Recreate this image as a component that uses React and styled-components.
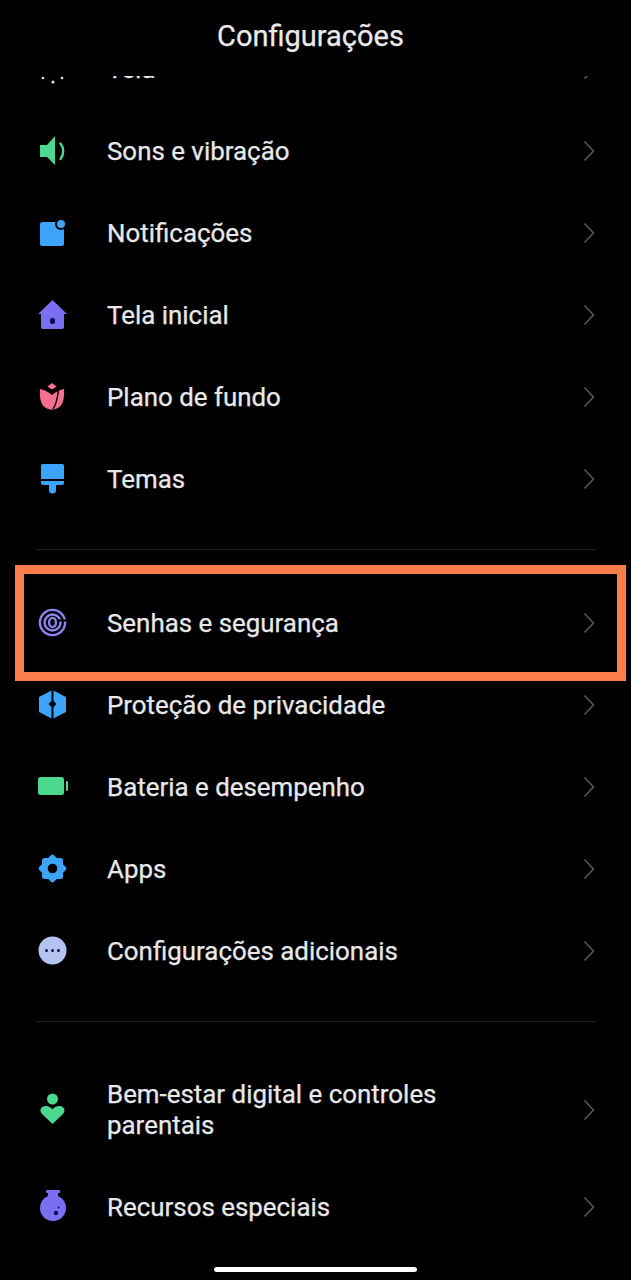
import React from "react";
import styled, { createGlobalStyle } from "styled-components";

const GlobalStyle = createGlobalStyle`
  html, body {
    margin: 0;
    background: #000;
  }
`;

const Screen = styled.div`
  width: 631px;
  height: 1280px;
  display: flex;
  flex-direction: column;
  overflow: hidden;
  background: #000;
  font-family: Roboto, "Liberation Sans", sans-serif;
`;

const Header = styled.header`
  height: 76px;
  flex-shrink: 0;
  display: flex;
  justify-content: center;
  padding: 19px 10px 0 0;
  box-sizing: border-box;
`;

const Title = styled.h1`
  margin: 0;
  font-size: 29px;
  line-height: 34px;
  font-weight: 400;
  color: #eaeaea;
  -webkit-text-stroke: 0.25px #eaeaea;
`;

const Scroller = styled.div`
  flex: 1;
  overflow: hidden;
`;

const List = styled.div`
  margin-top: -48px;
`;

const Row = styled.div`
  position: relative;
  display: flex;
  align-items: center;
  min-height: 82px;
  padding: 0 36px 0 35px;
  box-sizing: border-box;
`;

const IconBox = styled.svg`
  width: 34px;
  height: 34px;
  flex-shrink: 0;
  margin-right: 38px;
`;

const Label = styled.div`
  flex: 1;
  max-width: 400px;
  padding: 25px 0;
  font-size: 25.9px;
  line-height: 31px;
  color: #e8e8e8;
  -webkit-text-stroke: 0.25px #e8e8e8;
`;

const Chevron = styled.svg`
  width: 12px;
  height: 22px;
  margin-left: auto;
  flex-shrink: 0;
`;

const Highlight = styled.div`
  position: absolute;
  top: -17px;
  bottom: -17px;
  left: 15px;
  right: 5px;
  border: 9px solid #fb7d4b;
  pointer-events: none;
`;

const Divider = styled.div`
  height: 1px;
  margin: ${(p) => p.$top}px 36px ${(p) => p.$bottom}px 37px;
  background: #222;
`;

const GestureArea = styled.div`
  height: 32px;
  flex-shrink: 0;
  display: flex;
  justify-content: center;
  padding-top: 19px;
  box-sizing: border-box;
`;

const HomeBar = styled.div`
  width: 203px;
  height: 5px;
  border-radius: 3px;
  background: #fff;
`;

const GREEN = "#4ad98f";
const BLUE = "#3ca5fb";
const VIOLET = "#7a6ff0";
const NAVY = "#0c0c50";

const sunIcon = (
  <g fill="#e8e0d0">
    <circle cx="8" cy="26" r="1.3" />
    <circle cx="18" cy="30" r="1.6" />
    <circle cx="27" cy="26" r="1.3" />
    <circle cx="18" cy="17" r="7" />
  </g>
);

const soundIcon = (
  <g>
    <path d="M5 11h7l8-9v29l-8-8H5z" fill={GREEN} />
    <path d="M25.5 9.5c3.6 4.5 3.6 11 0 15.5" fill="none" stroke={GREEN} strokeWidth="2.4" strokeLinecap="round" />
  </g>
);

const notificationIcon = (
  <g>
    <rect x="5" y="6" width="24" height="24" rx="2.5" fill={BLUE} />
    <circle cx="26" cy="8" r="6" fill="#000" />
    <circle cx="26" cy="8" r="4" fill={BLUE} />
  </g>
);

const homeIcon = (
  <g>
    <path d="M17.5 2L32 16h-3v13a2 2 0 0 1-2 2H8a2 2 0 0 1-2-2V16H3z" fill={VIOLET} />
    <rect x="15" y="20" width="5" height="6" rx="2" fill={NAVY} />
  </g>
);

const tulipIcon = (
  <g>
    <path d="M5 9c4 .7 8 2.700 12 6 4-3.300 8-5.300 12-6 1 11-2 20.500-12 20.500S4 20 5 9z" fill="#f4708c" />
    <path d="M17 3l4.500 3.500-4.500 3.500-4.500-3.500z" fill="#f4708c" />
    <path d="M23.500 9c-.5 6-1.500 14-5.500 20" fill="none" stroke="#000" strokeWidth="1.400" />
    <path d="M11 8.500c4 1.500 8 2.500 12.500 .5" fill="none" stroke="#000" strokeWidth="1.400" />
  </g>
);

const brushIcon = (
  <g fill={BLUE}>
    <path d="M6 3.500A1.500 1.500 0 0 1 7.500 2h20A1.500 1.500 0 0 1 29 3.500V17H6z" />
    <path d="M6 19h23v2a2 2 0 0 1-2 2H8a2 2 0 0 1-2-2z" />
    <path d="M14 23h7v5a3.500 3.500 0 0 1-7 0z" />
  </g>
);

const fingerprintIcon = (
  <g>
    <g fill="none" stroke="#8d83ef" strokeWidth="2.400">
      <circle cx="17.500" cy="16.500" r="12.600" />
      <circle cx="17.500" cy="16.500" r="8" />
      <ellipse cx="17.500" cy="16.500" rx="3.400" ry="4.600" />
    </g>
    <rect x="23" y="13.500" width="9" height="2" fill="#000" />
  </g>
);

const shieldIcon = (
  <g>
    <path d="M17.500 2L31 9v15l-13.500 7L4 24V9z" fill={BLUE} />
    <rect x="16.500" y="2" width="2" height="29" fill="#000" />
    <path d="M17.500 12l4 4-4 4-4-4z" fill="#000" />
  </g>
);

const batteryIcon = (
  <g fill={GREEN}>
    <rect x="3" y="7" width="26" height="18" rx="2.500" />
    <rect x="31" y="11" width="2" height="10" rx="1" />
  </g>
);

const gearIcon = (
  <g>
    <rect x="7" y="6" width="21" height="21" rx="2.500" fill={BLUE} />
    <rect x="7" y="6" width="21" height="21" rx="2.500" fill={BLUE} transform="rotate(45 17.500 16.500)" />
    <circle cx="17.500" cy="16.500" r="4.800" fill="#000" />
  </g>
);

const moreIcon = (
  <g>
    <circle cx="17.500" cy="16.500" r="14" fill="#b4c3ef" />
    <circle cx="11.500" cy="16.500" r="1.500" fill={NAVY} />
    <circle cx="17.500" cy="16.500" r="1.500" fill={NAVY} />
    <circle cx="23.500" cy="16.500" r="1.500" fill={NAVY} />
  </g>
);

const heartIcon = (
  <g fill={GREEN}>
    <circle cx="17.500" cy="6" r="5.500" />
    <path d="M17.500 31L7.500 21.500C3.500 17.500 6 13 10.500 13c3 0 5.500 1.500 7 3.500 1.500-2 4-3.500 7-3.500 4.500 0 7 4.500 3 8.500z" />
  </g>
);

const flaskIcon = (
  <g>
    <rect x="11" y="0" width="14" height="3" rx="1" fill={VIOLET} />
    <rect x="13" y="2" width="10" height="8" fill={VIOLET} />
    <circle cx="18" cy="18" r="13" fill={VIOLET} />
    <circle cx="21" cy="23" r="2.200" fill={NAVY} />
    <circle cx="23.500" cy="17.500" r="1" fill={NAVY} />
  </g>
);

const Item = ({ icon, children, highlighted }) => (
  <Row>
    <IconBox viewBox="0 0 34 34">{icon}</IconBox>
    <Label>{children}</Label>
    <Chevron viewBox="0 0 12 22">
      <path d="M1.500 1.500L10.500 11l-9 9.500" fill="none" stroke="#565656" strokeWidth="1.600" />
    </Chevron>
    {highlighted && <Highlight />}
  </Row>
);

export default function App() {
  return (
    <Screen>
      <GlobalStyle />
      <Header>
        <Title>Configurações</Title>
      </Header>
      <Scroller>
        <List>
          <Item icon={sunIcon}>Tela</Item>
          <Item icon={soundIcon}>Sons e vibração</Item>
          <Item icon={notificationIcon}>Notificações</Item>
          <Item icon={homeIcon}>Tela inicial</Item>
          <Item icon={tulipIcon}>Plano de fundo</Item>
          <Item icon={brushIcon}>Temas</Item>
          <Divider $top={29} $bottom={32} />
          <Item icon={fingerprintIcon} highlighted>Senhas e segurança</Item>
          <Item icon={shieldIcon}>Proteção de privacidade</Item>
          <Item icon={batteryIcon}>Bateria e desempenho</Item>
          <Item icon={gearIcon}>Apps</Item>
          <Item icon={moreIcon}>Configurações adicionais</Item>
          <Divider $top={29} $bottom={32} />
          <Item icon={heartIcon}>Bem-estar digital e controles parentais</Item>
          <Item icon={flaskIcon}>Recursos especiais</Item>
        </List>
      </Scroller>
      <GestureArea>
        <HomeBar />
      </GestureArea>
    </Screen>
  );
}
